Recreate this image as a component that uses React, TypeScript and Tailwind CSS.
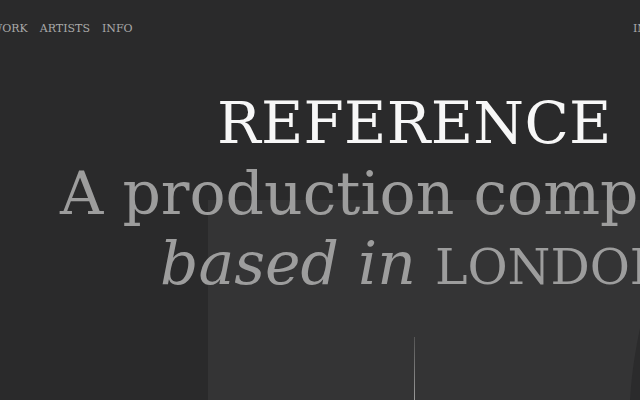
import React from "react";

const serif = { fontFamily: '"DejaVu Serif", "Liberation Serif", serif' };

export default function App() {
  return (
    <div
      className="relative w-[640px] h-[400px] overflow-hidden bg-[#2a2a2b]"
      style={serif}
    >
      {/* hero video frame */}
      <div className="absolute left-[208px] top-[200px] right-0 bottom-0 bg-[#343435]">
        <svg className="absolute right-0 bottom-0" width="14" height="72" viewBox="0 0 14 72">
          <path d="M14 0 C10 20 6 40 4 72 L14 72 Z" fill="#2b2b2c" />
        </svg>
        <div className="absolute left-[206px] top-[137px] bottom-0 w-px bg-gradient-to-b from-[#555] to-[#9a9a9a]" />
      </div>

      {/* Nav */}
      <div className="relative flex justify-between pt-[22px] text-[11px] leading-[14px] text-[#a9a9a9]">
        <div className="flex gap-[12px] -ml-[9px]">
          <span>WORK</span>
          <span>ARTISTS</span>
          <span>INFO</span>
        </div>
        <div className="pl-[633px] absolute left-0 whitespace-nowrap">INSTAGRAM</div>
      </div>

      {/* Hero copy */}
      <div className="relative mt-[52px] whitespace-nowrap text-[60px] leading-[70px]">
        <div className="ml-[217px] text-[58px] tracking-[0.005em] text-[#f7f7f7]">REFERENCE</div>
        <div className="ml-[60px] text-[#9d9d9d]">A production company</div>
        <div className="ml-[160px] text-[#9d9d9d]">
          <span className="italic">based in </span>
          <span className="text-[49px]">LONDON</span>
        </div>
      </div>
    </div>
  );
}
